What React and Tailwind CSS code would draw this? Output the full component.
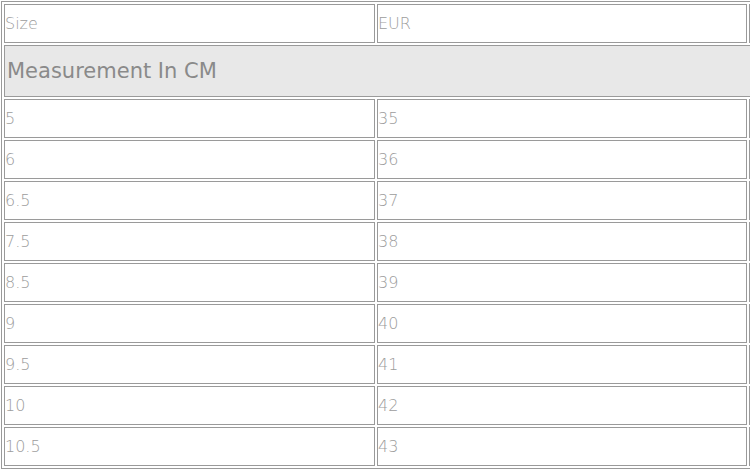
import React from 'react'

const rows = [
  ['5', '35'],
  ['6', '36'],
  ['6.5', '37'],
  ['7.5', '38'],
  ['8.5', '39'],
  ['9', '40'],
  ['9.5', '41'],
  ['10', '42'],
  ['10.5', '43'],
]

const cell = 'border border-[#9a9a9a] p-0 text-left align-middle h-[39px]'

export default function App() {
  return (
    <div className="w-[750px] h-[470px] overflow-hidden bg-white p-px">
      <table
        className="border border-[#9a9a9a] border-separate border-spacing-[2px] table-fixed w-[1122px] text-[16px] text-[#9c9c9c] font-extralight"
        style={{ fontFamily: '"DejaVu Sans", sans-serif' }}
      >
        <colgroup>
          <col className="w-[371px]" />
          <col className="w-[370px]" />
          <col className="w-[371px]" />
        </colgroup>
        <tbody>
          <tr>
            <td className={cell}>Size</td>
            <td className={cell}>EUR</td>
            <td className={cell}></td>
          </tr>
          <tr>
            <td
              colSpan={3}
              className="border border-[#9a9a9a] bg-[#e8e8e8] h-[52px] p-0 pl-[2px] pt-[2px] text-[21px] font-normal text-[#8a8a8a]"
            >
              Measurement In CM
            </td>
          </tr>
          {rows.map(([size, eur]) => (
            <tr key={size}>
              <td className={cell}>{size}</td>
              <td className={cell}>{eur}</td>
              <td className={cell}></td>
            </tr>
          ))}
        </tbody>
      </table>
    </div>
  )
}
